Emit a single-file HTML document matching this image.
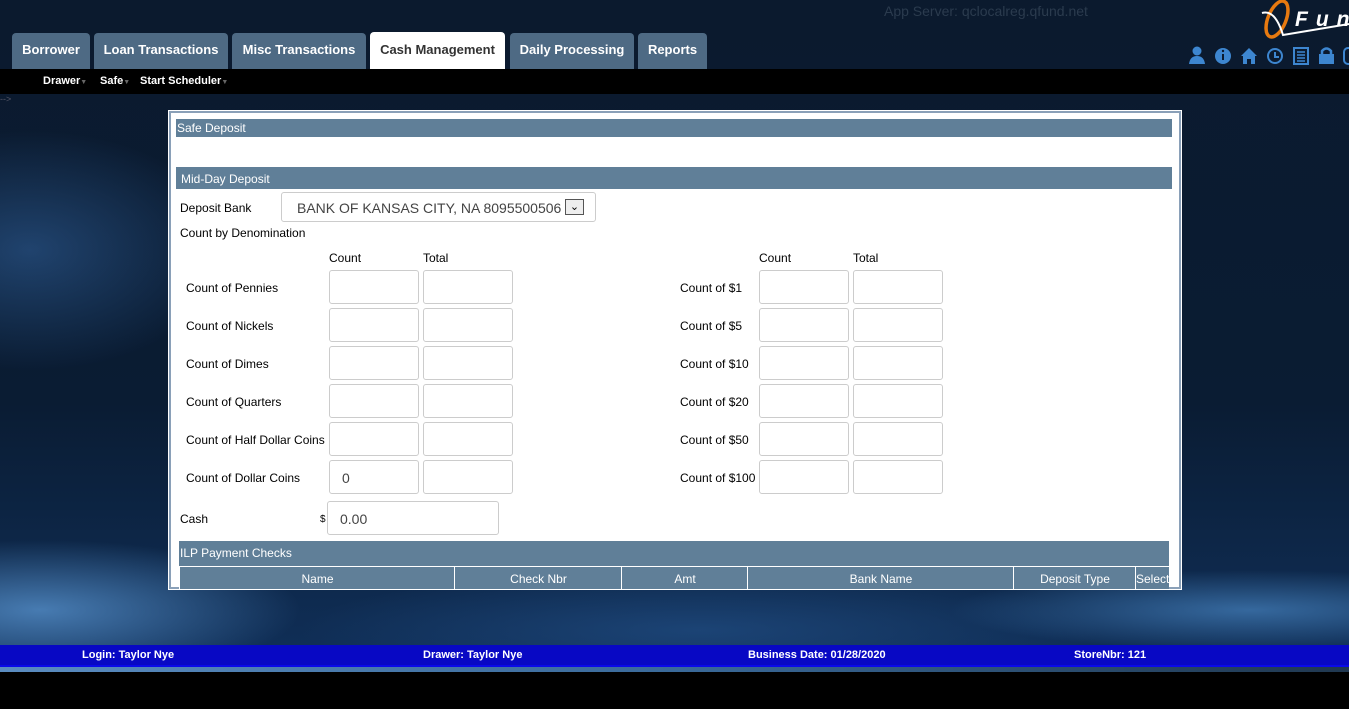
<!DOCTYPE html>
<html><head><meta charset="utf-8"><style>
*{margin:0;padding:0;box-sizing:border-box}
body{width:1349px;height:709px;overflow:hidden;position:relative;font-family:"Liberation Sans",sans-serif;background:#000}
.bg{position:absolute;left:0;top:0;width:1349px;height:672px;background:
radial-gradient(ellipse 260px 70px at 40px 610px,rgba(90,150,210,.75),transparent),
radial-gradient(ellipse 300px 40px at 1250px 610px,rgba(70,130,190,.7),transparent),
radial-gradient(ellipse 200px 120px at 30px 250px,rgba(50,100,160,.55),transparent),
radial-gradient(ellipse 400px 60px at 700px 630px,rgba(40,90,150,.5),transparent),
linear-gradient(#0b1a2e,#0a1c33 60%,#10305a)}
.a{position:absolute}
.tab{position:absolute;top:33px;height:36px;background:#4e6a84;border-radius:4px 4px 0 0;color:#fff;font-weight:bold;font-size:13px;line-height:34px;text-align:center}
.sub{position:absolute;top:75px;color:#fff;font-weight:bold;font-size:11px}
.sub i{color:#666;font-size:7px;font-style:normal}
.panel{position:absolute;left:169px;top:111px;width:1012px;height:478px;background:#fff;border:2px solid #8aa0b8;outline:1px solid #fff}
.hd{position:absolute;background:#607f98;color:#fff;font-size:12px}
.t{position:absolute;font-size:12px;color:#000}
.in{position:absolute;width:90px;height:34px;border:1px solid #ccc;border-radius:3px;background:#fff;font-size:14px;color:#444;padding:9px 0 0 12px}
.col{position:absolute;top:567px;height:22px;background:#607f98;color:#fff;font-size:12px;text-align:center;line-height:24px;border-left:1px solid #fff}
.ft{position:absolute;top:649px;color:#fff;font-weight:bold;font-size:11px}
</style></head><body>
<div class="bg"></div>
<div class="a" style="left:884px;top:3px;color:#2b3b4e;font-size:14px">App Server: qclocalreg.qfund.net</div>
<svg class="a" style="left:1255px;top:0" width="94" height="45"><ellipse cx="22" cy="19" rx="9" ry="19" transform="rotate(22 22 19)" fill="none" stroke="#e87a10" stroke-width="3.5"/><path d="M7 13 Q20 9 28 35 L94 24" fill="none" stroke="#fff" stroke-width="2"/><text x="40" y="26" fill="#fff" font-size="21" font-style="italic" font-weight="bold" letter-spacing="8" font-family="Liberation Sans">Fun</text></svg>
<svg class="a" style="left:1187px;top:46px" width="162" height="20" fill="#3d86d0">
<circle cx="10" cy="5" r="4.5"/><path d="M2 18 Q3 10 10 10 Q17 10 18 18Z"/>
<circle cx="36" cy="10" r="8"/><rect x="35" y="8" width="2" height="6" fill="#0b1a2e"/><circle cx="36" cy="5" r="1.2" fill="#0b1a2e"/>
<path d="M54 10 L62 2 L70 10 L68 10 L68 18 L64 18 L64 13 L60 13 L60 18 L56 18 L56 10Z"/>
<circle cx="88" cy="10" r="7" fill="none" stroke="#3d86d0" stroke-width="2"/><path d="M88 6 V11 H92" stroke="#3d86d0" stroke-width="2" fill="none"/>
<rect x="107" y="2" width="14" height="16" fill="none" stroke="#3d86d0" stroke-width="2"/><path d="M110 6H118M110 9H118M110 12H118M110 15H118" stroke="#3d86d0" stroke-width="1.5"/>
<rect x="132" y="8" width="15" height="10"/><path d="M135 9 V5 Q139.5 0 144 5 V9" fill="none" stroke="#3d86d0" stroke-width="2.5"/>
<rect x="157" y="2" width="10" height="16" rx="4" fill="none" stroke="#3d86d0" stroke-width="2"/>
</svg>
<div class="tab" style="left:12px;width:78px">Borrower</div>
<div class="tab" style="left:94px;width:134px">Loan Transactions</div>
<div class="tab" style="left:232px;width:134px">Misc Transactions</div>
<div class="tab" style="left:370px;width:135px;background:#fff;color:#333;top:32px;height:37px;line-height:36px">Cash Management</div>
<div class="tab" style="left:510px;width:124px">Daily Processing</div>
<div class="tab" style="left:638px;width:69px">Reports</div>
<div class="a" style="left:0;top:69px;width:1349px;height:25px;background:#000"></div>
<div class="sub" style="left:43px">Drawer<i>▼</i></div>
<div class="sub" style="left:100px">Safe<i>▼</i></div>
<div class="sub" style="left:140px">Start Scheduler<i>▼</i></div>
<div class="a" style="left:0;top:94px;color:#556;font-size:9px">--&gt;</div>
<div class="panel"></div>
<div class="hd" style="left:176px;top:119px;width:996px;height:18px;line-height:18px;padding-left:1px">Safe Deposit</div>
<div class="hd" style="left:176px;top:167px;width:996px;height:22px;line-height:24px;padding-left:5px">Mid-Day Deposit</div>
<div class="t" style="left:180px;top:201px">Deposit Bank</div>
<div class="a" style="left:281px;top:192px;width:315px;height:30px;border:1px solid #ccc;border-radius:3px;font-size:14px;color:#444;padding:7px 0 0 15px">BANK OF KANSAS CITY, NA 8095500506<span style="position:absolute;left:283px;top:6px;width:19px;height:16px;border:1px solid #555;background:#eee;font-size:11px;text-align:center;line-height:14px;color:#000">&#8964;</span></div>
<div class="t" style="left:180px;top:226px">Count by Denomination</div>
<div class="t" style="left:329px;top:251px">Count</div><div class="t" style="left:423px;top:251px">Total</div>
<div class="t" style="left:759px;top:251px">Count</div><div class="t" style="left:853px;top:251px">Total</div>

<div class="t" style="left:186px;top:281px">Count of Pennies</div><div class="t" style="left:680px;top:281px">Count of $1</div>
<div class="t" style="left:186px;top:319px">Count of Nickels</div><div class="t" style="left:680px;top:319px">Count of $5</div>
<div class="t" style="left:186px;top:357px">Count of Dimes</div><div class="t" style="left:680px;top:357px">Count of $10</div>
<div class="t" style="left:186px;top:395px">Count of Quarters</div><div class="t" style="left:680px;top:395px">Count of $20</div>
<div class="t" style="left:186px;top:433px">Count of Half Dollar Coins</div><div class="t" style="left:680px;top:433px">Count of $50</div>
<div class="t" style="left:186px;top:471px">Count of Dollar Coins</div><div class="t" style="left:680px;top:471px">Count of $100</div>

<div class="in" style="left:329px;top:270px"></div><div class="in" style="left:423px;top:270px"></div><div class="in" style="left:759px;top:270px"></div><div class="in" style="left:853px;top:270px"></div>
<div class="in" style="left:329px;top:308px"></div><div class="in" style="left:423px;top:308px"></div><div class="in" style="left:759px;top:308px"></div><div class="in" style="left:853px;top:308px"></div>
<div class="in" style="left:329px;top:346px"></div><div class="in" style="left:423px;top:346px"></div><div class="in" style="left:759px;top:346px"></div><div class="in" style="left:853px;top:346px"></div>
<div class="in" style="left:329px;top:384px"></div><div class="in" style="left:423px;top:384px"></div><div class="in" style="left:759px;top:384px"></div><div class="in" style="left:853px;top:384px"></div>
<div class="in" style="left:329px;top:422px"></div><div class="in" style="left:423px;top:422px"></div><div class="in" style="left:759px;top:422px"></div><div class="in" style="left:853px;top:422px"></div>
<div class="in" style="left:329px;top:460px">0</div><div class="in" style="left:423px;top:460px"></div><div class="in" style="left:759px;top:460px"></div><div class="in" style="left:853px;top:460px"></div>

<div class="t" style="left:180px;top:512px">Cash</div>
<div class="t" style="left:320px;top:514px;font-size:10px">$</div>
<div class="in" style="left:327px;top:501px;width:172px">0.00</div>
<div class="hd" style="left:179px;top:541px;width:990px;height:25px;line-height:25px;padding-left:1px">ILP Payment Checks</div>
<div class="col" style="left:179px;width:276px">Name</div>
<div class="col" style="left:454px;width:168px">Check Nbr</div>
<div class="col" style="left:621px;width:127px">Amt</div>
<div class="col" style="left:747px;width:267px">Bank Name</div>
<div class="col" style="left:1013px;width:123px">Deposit Type</div>
<div class="col" style="left:1135px;width:34px;text-align:left;overflow:hidden">Select</div>
<div class="a" style="left:0;top:645px;width:1349px;height:22px;background:#0808c4;border-bottom:2px solid #0a0ae8"></div>
<div class="a" style="left:0;top:667px;width:1349px;height:5px;background:linear-gradient(90deg,#5a8cc0,#3a6a9a 50%,#203850)"></div>
<div class="ft" style="left:82px">Login: Taylor Nye</div>
<div class="ft" style="left:423px">Drawer: Taylor Nye</div>
<div class="ft" style="left:748px">Business Date: 01/28/2020</div>
<div class="ft" style="left:1074px">StoreNbr: 121</div>
</body></html>
